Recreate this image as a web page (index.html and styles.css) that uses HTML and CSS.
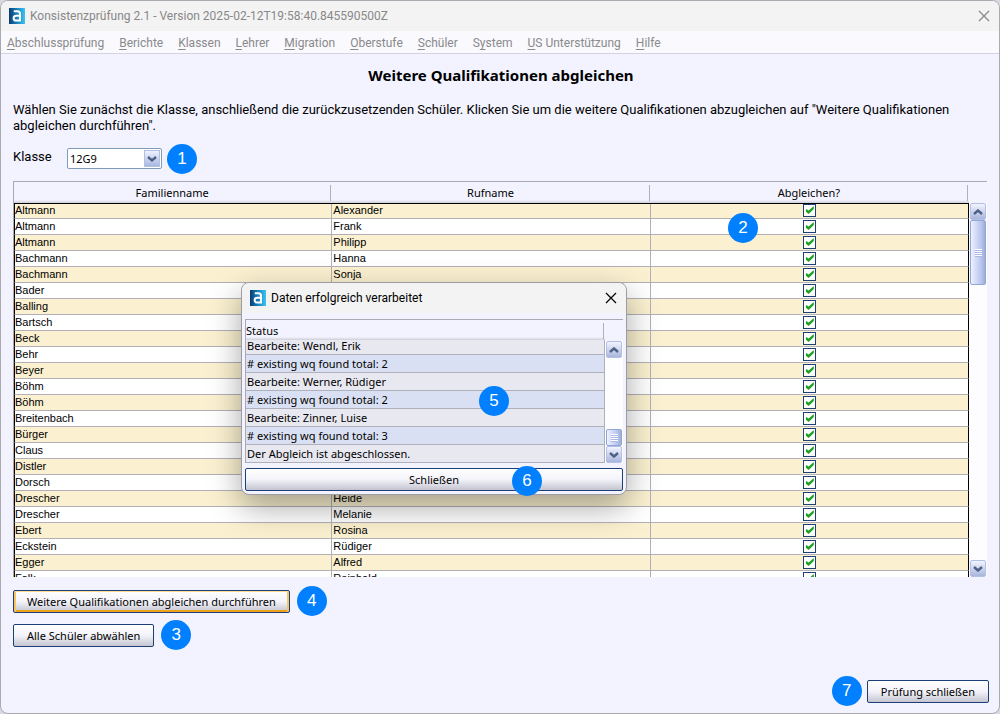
FILE: index.html
```html
<!doctype html>
<html lang="de">
    <head>
        <meta charset="utf-8"/>
        <title>Konsistenzprüfung 2.1</title>
        <link rel="stylesheet" href="styles.css">
    </head>
    <body>
        <svg class="defs" aria-hidden="true">
            <defs>
                <linearGradient id="logoBlue" x1="0" x2="1">
                    <stop offset="0" stop-color="#0b3c74"/>
                    <stop offset="0.5" stop-color="#1a83bd"/>
                    <stop offset="1" stop-color="#3cc4f2"/>
                </linearGradient>
                <symbol id="logo" viewBox="0 0 16 16">
                    <rect width="16" height="16" fill="url(#logoBlue)"/>
                    <path d="M4.8 3.2H8.4Q11 3.2 11 5.8V12.6H7.2Q4.6 12.6 4.6 10.2Q4.6 7.7 7.2 7.7H11" fill="none" stroke="#fff" stroke-width="2"/>
                </symbol>
                <symbol id="close" viewBox="0 0 12 12">
                    <path d="M1 1L11 11M11 1L1 11" fill="none" stroke="currentColor" stroke-width="1.2"/>
                </symbol>
                <symbol id="up" viewBox="0 0 10 6">
                    <path d="M1 5L5 1.5L9 5" fill="none" stroke="#4d6185" stroke-width="2.4"/>
                </symbol>
                <symbol id="down" viewBox="0 0 10 6">
                    <path d="M1 1L5 4.5L9 1" fill="none" stroke="#4d6185" stroke-width="2.4"/>
                </symbol>
            </defs>
        </svg>
        <div class="window">
            <header class="titlebar">
                <svg class="logo"><use href="#logo"/></svg>
                <span>Konsistenzprüfung 2.1 - Version 2025-02-12T19:58:40.845590500Z</span>
                <button class="close" type="button" aria-label="Fenster schließen"><svg><use href="#close"/></svg></button>
            </header>
            <nav class="menubar">
                <a href="#"><u>A</u>bschlussprüfung</a>
                <a href="#"><u>B</u>erichte</a>
                <a href="#"><u>K</u>lassen</a>
                <a href="#"><u>L</u>ehrer</a>
                <a href="#"><u>M</u>igration</a>
                <a href="#"><u>O</u>berstufe</a>
                <a href="#"><u>S</u>chüler</a>
                <a href="#">S<u>y</u>stem</a>
                <a href="#"><u>U</u>S Unterstützung</a>
                <a href="#"><u>H</u>ilfe</a>
            </nav>
            <main>
                <h1>Weitere Qualifikationen abgleichen</h1>
                <p class="intro">Wählen Sie zunächst die Klasse, anschließend die zurückzusetzenden Schüler. Klicken Sie um die weitere Qualifikationen abzugleichen auf "Weitere Qualifikationen abgleichen durchführen".</p>
                <div class="row klasse">
                    <label for="klasse">Klasse</label>
                    <select id="klasse">
                        <option>12G9</option>
                    </select>
                    <span class="badge">1</span>
                </div>
                <div class="grid">
                    <div class="grid-rows">
                        <table class="pupils">
                            <thead>
                                <tr><th><span>Familienname</span></th><th><span>Rufname</span></th><th><span>Abgleichen?</span></th></tr>
                            </thead>
                            <tbody>
                                <tr><td>Altmann</td><td>Alexander</td><td><input type="checkbox" aria-label="Abgleichen" checked></td></tr>
                                <tr><td>Altmann</td><td>Frank</td><td><input type="checkbox" aria-label="Abgleichen" checked></td></tr>
                                <tr><td>Altmann</td><td>Philipp</td><td><input type="checkbox" aria-label="Abgleichen" checked></td></tr>
                                <tr><td>Bachmann</td><td>Hanna</td><td><input type="checkbox" aria-label="Abgleichen" checked></td></tr>
                                <tr><td>Bachmann</td><td>Sonja</td><td><input type="checkbox" aria-label="Abgleichen" checked></td></tr>
                                <tr><td>Bader</td><td></td><td><input type="checkbox" aria-label="Abgleichen" checked></td></tr>
                                <tr><td>Balling</td><td></td><td><input type="checkbox" aria-label="Abgleichen" checked></td></tr>
                                <tr><td>Bartsch</td><td></td><td><input type="checkbox" aria-label="Abgleichen" checked></td></tr>
                                <tr><td>Beck</td><td></td><td><input type="checkbox" aria-label="Abgleichen" checked></td></tr>
                                <tr><td>Behr</td><td></td><td><input type="checkbox" aria-label="Abgleichen" checked></td></tr>
                                <tr><td>Beyer</td><td></td><td><input type="checkbox" aria-label="Abgleichen" checked></td></tr>
                                <tr><td>Böhm</td><td></td><td><input type="checkbox" aria-label="Abgleichen" checked></td></tr>
                                <tr><td>Böhm</td><td></td><td><input type="checkbox" aria-label="Abgleichen" checked></td></tr>
                                <tr><td>Breitenbach</td><td></td><td><input type="checkbox" aria-label="Abgleichen" checked></td></tr>
                                <tr><td>Bürger</td><td></td><td><input type="checkbox" aria-label="Abgleichen" checked></td></tr>
                                <tr><td>Claus</td><td></td><td><input type="checkbox" aria-label="Abgleichen" checked></td></tr>
                                <tr><td>Distler</td><td></td><td><input type="checkbox" aria-label="Abgleichen" checked></td></tr>
                                <tr><td>Dorsch</td><td></td><td><input type="checkbox" aria-label="Abgleichen" checked></td></tr>
                                <tr><td>Drescher</td><td>Heide</td><td><input type="checkbox" aria-label="Abgleichen" checked></td></tr>
                                <tr><td>Drescher</td><td>Melanie</td><td><input type="checkbox" aria-label="Abgleichen" checked></td></tr>
                                <tr><td>Ebert</td><td>Rosina</td><td><input type="checkbox" aria-label="Abgleichen" checked></td></tr>
                                <tr><td>Eckstein</td><td>Rüdiger</td><td><input type="checkbox" aria-label="Abgleichen" checked></td></tr>
                                <tr><td>Egger</td><td>Alfred</td><td><input type="checkbox" aria-label="Abgleichen" checked></td></tr>
                                <tr><td>Falk</td><td>Reinhold</td><td><input type="checkbox" aria-label="Abgleichen" checked></td></tr>
                            </tbody>
                        </table>
                    </div>
                    <div class="scrollbar">
                        <button class="arrow" type="button" aria-label="Nach oben"><svg><use href="#up"/></svg></button>
                        <div class="thumb long"><i></i></div>
                        <button class="arrow last" type="button" aria-label="Nach unten"><svg><use href="#down"/></svg></button>
                    </div>
                    <span class="badge on-grid">2</span>
                </div>
                <div class="row">
                    <button class="btn focused" type="button">Weitere Qualifikationen abgleichen durchführen</button>
                    <span class="badge">4</span>
                </div>
                <div class="row second">
                    <button class="btn" type="button">Alle Schüler abwählen</button>
                    <span class="badge">3</span>
                </div>
                <footer class="row">
                    <span class="badge">7</span>
                    <button class="btn" type="button">Prüfung schließen</button>
                </footer>
            </main>
        </div>

        <section class="dialog" role="dialog" aria-labelledby="dialogTitle">
            <header class="titlebar">
                <svg class="logo"><use href="#logo"/></svg>
                <span id="dialogTitle">Daten erfolgreich verarbeitet</span>
                <button class="close" type="button" aria-label="Schließen"><svg><use href="#close"/></svg></button>
            </header>
            <div class="dialog-body">
                <div class="status">
                    <div class="status-list">
                        <div class="status-head"><span>Status</span></div>
                        <div class="status-view">
                            <table>
                                <tr><td>Bearbeite: Wendl, Erik</td></tr>
                                <tr><td># existing wq found total: 2</td></tr>
                                <tr><td>Bearbeite: Werner, Rüdiger</td></tr>
                                <tr><td># existing wq found total: 2</td></tr>
                                <tr><td>Bearbeite: Zinner, Luise</td></tr>
                                <tr><td># existing wq found total: 3</td></tr>
                                <tr><td>Der Abgleich ist abgeschlossen.</td></tr>
                            </table>
                        </div>
                    </div>
                    <div class="scrollbar">
                        <button class="arrow" type="button" aria-label="Nach oben"><svg><use href="#up"/></svg></button>
                        <div class="thumb short"><i></i></div>
                        <button class="arrow" type="button" aria-label="Nach unten"><svg><use href="#down"/></svg></button>
                    </div>
                </div>
                <button class="btn" type="button">Schließen</button>
            </div>
            <span class="badge on-status">5</span>
            <span class="badge on-button">6</span>
        </section>
    </body>
</html>
```
FILE: styles.css
```css
* {
    box-sizing: border-box;
}

body {
    margin: 0;
    background-color: #d9d8e2;
    color: #000;
    font-family: "Noto Sans", sans-serif;
    font-size: 11px;
    line-height: 16px;
}

.defs {
    position: absolute;
    width: 0;
    height: 0;
}

.window {
    display: flex;
    flex-direction: column;
    height: 100vh;
    border: 1px solid #a9a9b0;
    border-radius: 8px;
    background-color: #f3f3ff;
    overflow: hidden;
}

.titlebar {
    display: flex;
    align-items: center;
    flex: none;
    height: 30px;
    padding: 0 9px 0 8px;
    background-color: #f3f3f3;
    font-family: Roboto, sans-serif;
    font-size: 12px;
}

.window > .titlebar {
    color: #888;
}

.logo {
    width: 16px;
    height: 16px;
    margin-right: 5px;
}

.close {
    display: flex;
    margin-left: auto;
    padding: 0;
    border: 0;
    background: none;
    color: inherit;
}

.close svg {
    width: 12px;
    height: 12px;
}

.menubar {
    display: flex;
    align-items: center;
    gap: 15px;
    flex: none;
    height: 23px;
    padding: 2px 6px 0;
    border-bottom: 1px solid #d3d3e3;
    background-color: #f9f9fe;
    font-family: Roboto, sans-serif;
    font-size: 12px;
}

.menubar a {
    color: #8a8a8a;
    text-decoration: none;
    white-space: nowrap;
}

.menubar u {
    text-decoration-skip-ink: none;
    text-underline-offset: 2px;
}

main {
    display: flex;
    flex-direction: column;
    flex: 1;
    min-height: 0;
    padding: 11px 10px 10px 12px;
}

h1 {
    margin: 0 0 17px;
    font-size: 15px;
    line-height: 20px;
    text-align: center;
}

.intro {
    margin: 0 0 14px;
}

.intro,
.klasse label {
    font-family: Roboto, sans-serif;
    font-size: 13px;
}

.row {
    display: flex;
    align-items: center;
    flex: none;
    gap: 7px;
    height: 24px;
}

.klasse {
    gap: 5px;
    height: 21px;
    margin-bottom: 12px;
}

.klasse label {
    width: 49px;
    padding-bottom: 4px;
}

select {
    width: 95px;
    height: 21px;
    padding: 0 2px;
    border: 1px solid #7f9db9;
    border-radius: 2px;
    appearance: none;
    background: #fff url("data:image/svg+xml,%3Csvg xmlns='http://www.w3.org/2000/svg' width='16' height='17'%3E%3ClinearGradient id='g' x2='0' y2='1'%3E%3Cstop stop-color='%23f2f4ff'/%3E%3Cstop offset='1' stop-color='%23a6b6e0'/%3E%3C/linearGradient%3E%3Crect x='.5' y='.5' width='15' height='16' fill='url(%23g)' stroke='%23b2bfe2'/%3E%3Cpath d='M4 7l4 3.5L12 7' fill='none' stroke='%234d6185' stroke-width='2.4'/%3E%3C/svg%3E") no-repeat right 1px center;
    color: #000;
    font: 11px "Noto Sans", sans-serif;
}

.badge {
    flex: none;
    width: 30px;
    height: 30px;
    border-radius: 50%;
    background-color: #007fff;
    color: #fff;
    font: 17px/30px "Liberation Sans", sans-serif;
    text-align: center;
}

/* tables */
.grid {
    position: relative;
    display: flex;
    flex: 1;
    min-height: 0;
    margin: 0 2px 12px 0;
    border-top: 1px solid #a9a9b5;
    border-left: 1px solid #a9a9b5;
    background-color: #fbfbff;
}

.grid-rows {
    flex: 1;
    overflow: hidden;
}

table {
    width: 100%;
    border-spacing: 0;
    table-layout: fixed;
}

.pupils th {
    height: 22px;
    padding: 3px 1px 2px 0;
    border-bottom: 1px solid #000;
    background: linear-gradient(#f3f3ff 18px, #cfcfd8);
    font-weight: normal;
}

.pupils th span {
    display: block;
    border-right: 1px solid #b0b0ba;
}

.pupils td {
    height: 16px;
    padding: 0 1px;
    border-right: 1px solid #b0b0b6;
    border-bottom: 1px solid #b0b0b6;
    background-color: #fff;
    font: 11px/15px "Liberation Sans", sans-serif;
}

.pupils tr:nth-child(odd) td {
    background-color: #fbf1d0;
}

.pupils tbody tr:first-child td {
    height: 15px;
    line-height: 13px;
    vertical-align: top;
}

.pupils td:first-child {
    padding-left: 0;
    border-left: 1px solid #000;
}

.pupils td:last-child {
    border-right: 1px solid #000;
}

input[type="checkbox"] {
    display: block;
    width: 13px;
    height: 13px;
    margin: 0 auto;
    border: 1px solid #1c3f78;
    appearance: none;
    background-color: #fff;
}

input[type="checkbox"]:checked::after {
    content: "";
    display: block;
    width: 8px;
    height: 8px;
    margin: 1px 2px;
    background-color: #21a121;
    clip-path: polygon(0 34%, 36% 56%, 100% 0, 100% 38%, 36% 100%, 0 72%);
}

.scrollbar {
    display: flex;
    flex-direction: column;
    flex: none;
    width: 18px;
    padding: 0 1px;
    border-top: 21px solid #f3f3ff;
    background-color: #fdfdff;
}

.arrow {
    display: flex;
    align-items: center;
    justify-content: center;
    flex: none;
    height: 17px;
    padding: 0;
    border: 1px solid #b2bfe6;
    border-radius: 2px;
    background: linear-gradient(#f2f4ff, #a9b6dc);
}

.arrow.last {
    margin-top: auto;
}

.arrow svg {
    width: 10px;
    height: 6px;
}

.thumb {
    display: flex;
    align-items: center;
    justify-content: center;
    border: 1px solid #8fa6d6;
    border-radius: 2px;
    background: linear-gradient(to right, #eef1ff, #b9c6ee 70%, #a2aed0);
}

.thumb.long {
    height: 65px;
}

.thumb.short {
    height: 17px;
    margin-top: auto;
}

.thumb i {
    width: 7px;
    height: 8px;
    background: repeating-linear-gradient(#fff 0 1px, #a9b9e6 1px 2px);
}

.btn {
    height: 23px;
    padding: 1px 13px 0;
    border: 1px solid #1c3f78;
    border-radius: 2px;
    background: linear-gradient(#fff, #f3f3fa 50%, #c4c4d0);
    color: #000;
    font: 11px "Noto Sans", sans-serif;
}

.btn.focused {
    box-shadow: inset 0 1px #fbdd94, inset 2px 0 #f8c566, inset -2px 0 #f8c566, inset 0 -2px #f0a11c;
}

.row.second {
    margin-top: 10px;
}

footer.row {
    gap: 5px;
    justify-content: flex-end;
    margin-top: 32px;
}

/* status dialog */
.dialog {
    position: absolute;
    top: 282px;
    left: 241px;
    width: 386px;
    border: 1px solid #9c9ca2;
    border-radius: 8px;
    background-color: #f3f3ff;
    box-shadow: 0 12px 32px rgba(0, 0, 0, 0.35);
}

.dialog > .titlebar {
    border-radius: 8px 8px 0 0;
}

.dialog-body {
    padding: 6px 3px 3px;
}

.dialog .btn {
    display: block;
    width: 100%;
    padding-top: 0;
}

.status {
    display: flex;
    margin-bottom: 5px;
    border-top: 1px solid #a9a9b5;
    border-left: 1px solid #a9a9b5;
}

.status-list {
    flex: 1;
}

.status-head {
    height: 20px;
    padding: 3px 1px 1px 0;
    background: linear-gradient(#f3f3ff 17px, #cfcfd8);
}

.status-head span {
    display: block;
    border-right: 1px solid #b0b0ba;
}

.status-view {
    display: flex;
    align-items: flex-end;
    height: 123px;
    overflow: hidden;
}

.status-view td {
    height: 18px;
    padding: 0 1px;
    border-right: 1px solid #b0b0ba;
    border-bottom: 1px solid #b0b0ba;
    background-color: #e8e8f1;
}

.status-view tr:nth-child(even) td {
    background-color: #d9e0f3;
}

.badge.on-grid {
    position: absolute;
    top: 31px;
    left: 714px;
}

.badge.on-status {
    position: absolute;
    top: 103px;
    left: 237px;
}

.badge.on-button {
    position: absolute;
    top: 183px;
    left: 270px;
}
```
